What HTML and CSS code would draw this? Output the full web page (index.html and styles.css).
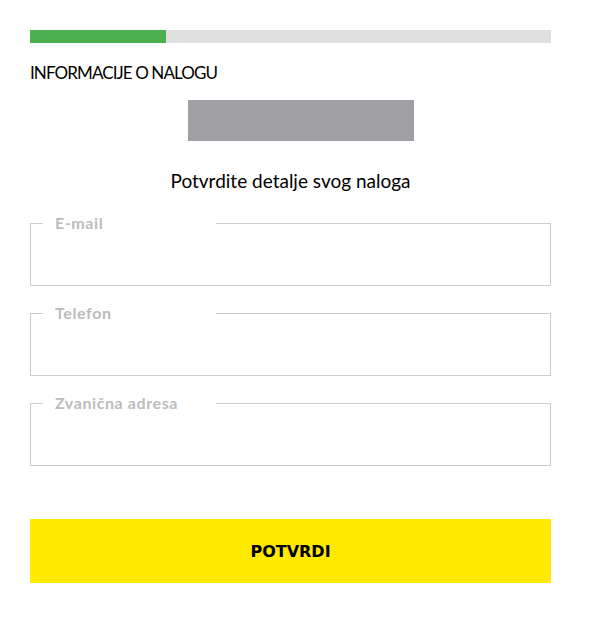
FILE: index.html
```html
<!DOCTYPE html>
<html>
<head>
    <title>Informacije o nalogu</title>
    <link rel="stylesheet" href="styles.css">
</head>
<body>
    <div class="container">
        <div class="progress">
            <div class="progress-fill"></div>
        </div>

        <h2 class="step-title">INFORMACIJE O NALOGU</h2>

        <div class="logo"></div>

        <h1>Potvrdite detalje svog naloga</h1>

        <form id="account-form" method="post">
            <fieldset>
                <legend>E-mail</legend>
                <input type="text" id="email" name="email">
            </fieldset>

            <fieldset>
                <legend>Telefon</legend>
                <input type="text" id="phone" name="phone">
            </fieldset>

            <fieldset>
                <legend>Zvanična adresa</legend>
                <input type="text" id="address" name="address">
            </fieldset>

            <button type="submit">POTVRDI</button>
        </form>
    </div>
</body>
</html>
```

FILE: styles.css
```css
body {
    font-family: "Lato", "Open Sans", sans-serif;
    margin: 0;
    padding: 0;
    background-color: #fff;
    color: #000;
}

.container {
    width: 521px;
    margin-left: 30px;
    padding-top: 30px;
}

.progress {
    height: 13px;
    background-color: #e0e0e0;
}

.progress-fill {
    width: 136px;
    height: 100%;
    background-color: #4caf50;
}

.step-title {
    font-size: 17px;
    font-weight: normal;
    margin: 20px 0 0;
    line-height: 20px;
    letter-spacing: -0.9px;
}

.logo {
    width: 226px;
    height: 41px;
    margin: 17px 0 0 158px;
    background-color: #a0a0a4;
}

h1 {
    font-size: 19px;
    font-weight: normal;
    text-align: center;
    margin: 28px 0 0;
    line-height: 24px;
}

form {
    margin-top: 21px;
}

fieldset {
    margin: 0 0 18px;
    padding: 0 12px;
    border: 1px solid #cccccc;
    height: 72px;
    box-sizing: border-box;
}

legend {
    width: 173px;
    box-sizing: border-box;
    padding: 0 12px;
    font-size: 16px;
    font-weight: bold;
    color: #bcbcbc;
    line-height: 18px;
    letter-spacing: 0.6px;
}

input[type="text"] {
    width: 100%;
    height: 40px;
    border: none;
    outline: none;
    background: transparent;
    padding: 0;
}

button[type="submit"] {
    display: block;
    width: 100%;
    height: 64px;
    margin-top: 53px;
    background-color: #ffea00;
    border: none;
    font-family: "DejaVu Sans", sans-serif;
    font-size: 16px;
    font-weight: bold;
    color: #000;
    cursor: pointer;
}
```
